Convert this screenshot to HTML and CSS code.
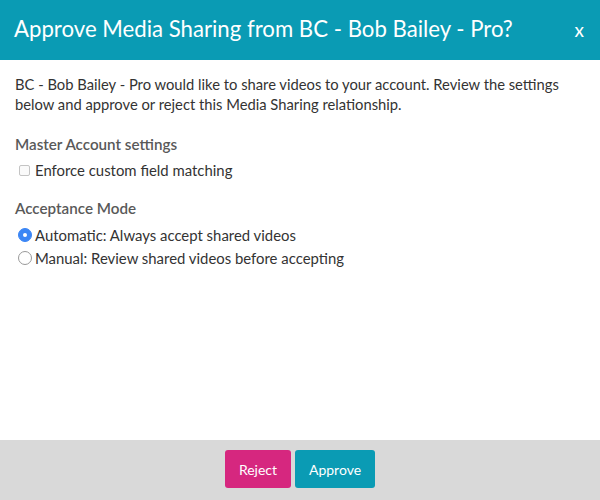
FILE: index.html
```html
<!DOCTYPE html>
<html>
<head>
<meta charset="utf-8">
<link rel="stylesheet" href="styles.css">
</head>
<body>
<div class="modal">
  <div class="header">
    <h1 class="title">Approve Media Sharing from BC - Bob Bailey - Pro?</h1>
    <span class="close">x</span>
  </div>
  <div class="body">
    <p class="intro">BC - Bob Bailey - Pro would like to share videos to your account. Review the settings below and approve or reject this Media Sharing relationship.</p>
    <h2 class="section">Master Account settings</h2>
    <label class="option"><span class="checkbox"></span>Enforce custom field matching</label>
    <h2 class="section section-second">Acceptance Mode</h2>
    <label class="option option-radio"><span class="radio radio-on"></span>Automatic: Always accept shared videos</label>
    <label class="option option-radio"><span class="radio"></span>Manual: Review shared videos before accepting</label>
  </div>
  <div class="footer">
    <button class="btn btn-reject">Reject</button>
    <button class="btn btn-approve">Approve</button>
  </div>
</div>
</body>
</html>
```
FILE: styles.css
```css
html, body {
  margin: 0;
  padding: 0;
}
body {
  font-family: Lato, "Open Sans", sans-serif;
  background: #fff;
  color: #333;
}
.modal {
  width: 600px;
  height: 500px;
  display: flex;
  flex-direction: column;
}
.header {
  height: 60px;
  background: #0a9bb4;
  color: #fff;
  display: flex;
  align-items: center;
  justify-content: space-between;
  padding: 0 16px 0 14px;
  box-sizing: border-box;
}
.title {
  margin: 0;
  font-size: 22.2px;
  font-weight: normal;
  line-height: 1;
  padding-bottom: 2px;
}
.close {
  font-size: 19px;
  line-height: 1;
  padding-bottom: 1px;
}
.body {
  flex: 1;
  padding: 14px 15px 0 15px;
}
.intro {
  margin: 0;
  font-size: 14.75px;
  line-height: 20px;
}
.section {
  margin: 20px 0 0 0;
  font-size: 15.2px;
  font-weight: 600;
  color: #595959;
  line-height: 20px;
}
.section-second {
  margin-top: 18px;
}
.option {
  display: flex;
  align-items: center;
  font-size: 14.9px;
  line-height: 20px;
  margin-top: 6px;
  color: #333;
}
.option-radio {
  margin-top: 7px;
}
.option + .option {
  margin-top: 3px;
}
.checkbox {
  width: 11px;
  height: 11px;
  border: 1px solid #c4c4c4;
  border-radius: 2px;
  margin: 0 5px 0 4px;
  box-sizing: border-box;
  background: #fafafa;
}
.radio {
  width: 14px;
  height: 14px;
  border: 1px solid #999;
  border-radius: 50%;
  box-sizing: border-box;
  margin: 0 3px 0 3px;
  background: #fff;
  position: relative;
}
.radio-on {
  background: #3b86f5;
  border-color: #3b86f5;
}
.radio-on::after {
  content: "";
  position: absolute;
  left: 4px;
  top: 4px;
  width: 4px;
  height: 4px;
  border-radius: 50%;
  background: #fff;
}
.footer {
  height: 60px;
  background: #d9d9d9;
  display: flex;
  justify-content: center;
  align-items: flex-start;
  gap: 4px;
  padding-top: 10px;
  box-sizing: border-box;
}
.btn {
  border: none;
  border-radius: 3px;
  color: #fff;
  font-family: Lato, "Open Sans", sans-serif;
  font-size: 14px;
  height: 38px;
  padding: 0;
  cursor: pointer;
}
.btn-reject {
  background: #d6277f;
  width: 66px;
}
.btn-approve {
  background: #0a9bb4;
  width: 80px;
}
```
